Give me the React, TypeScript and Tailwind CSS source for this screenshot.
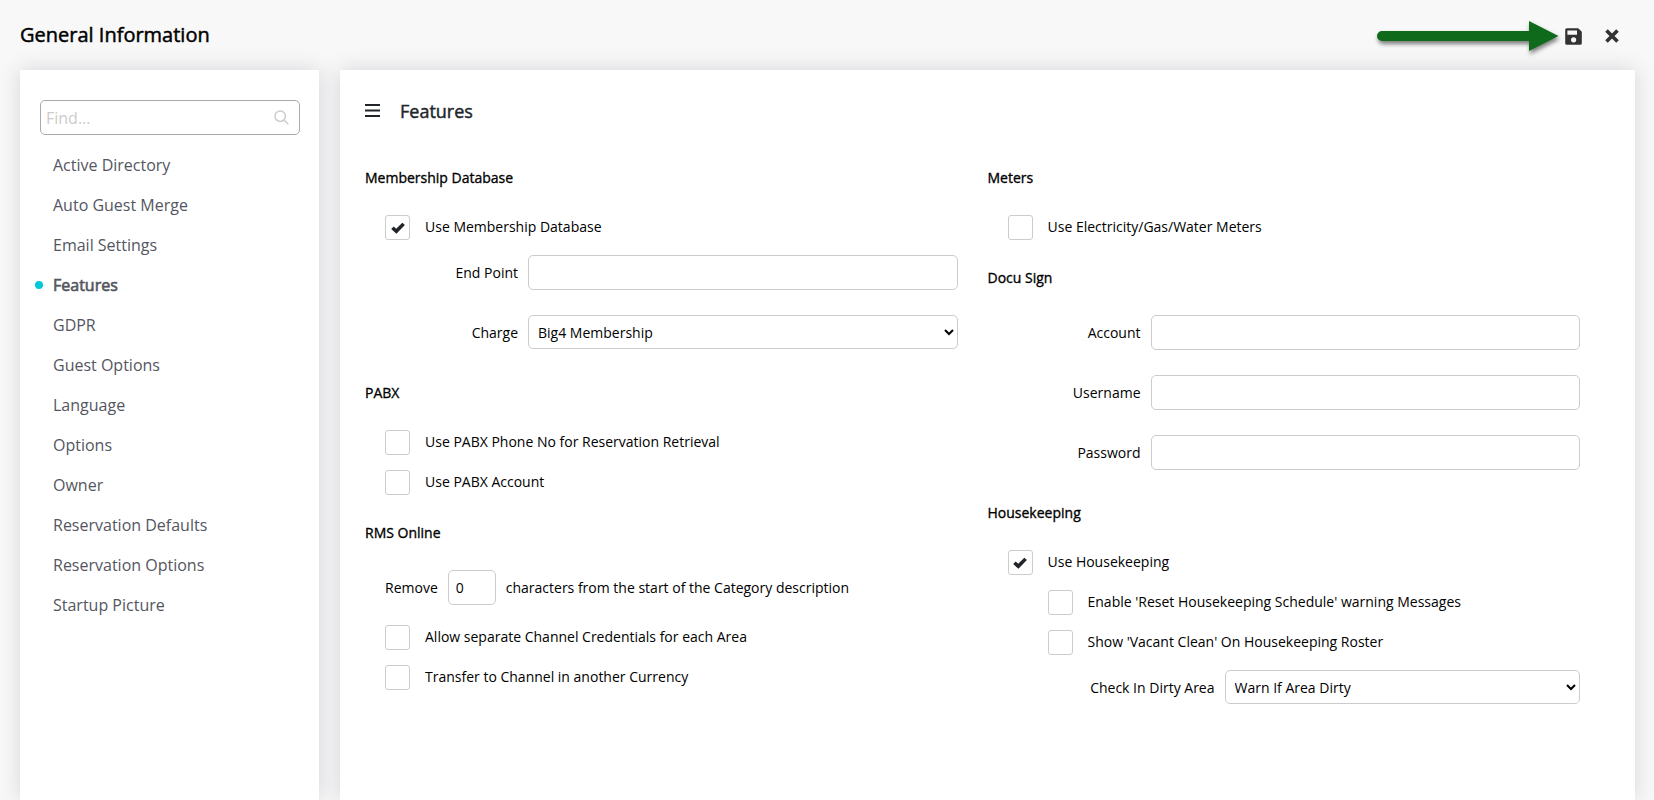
import type { ReactNode } from "react";

const navItems = [
  "Active Directory",
  "Auto Guest Merge",
  "Email Settings",
  "Features",
  "GDPR",
  "Guest Options",
  "Language",
  "Options",
  "Owner",
  "Reservation Defaults",
  "Reservation Options",
  "Startup Picture",
];

const controlClass =
  "w-full rounded-[5px] border border-[#ccc] bg-white text-sm text-black outline-none";

// regular weight thickened with a stroke, keeps the regular letter widths
const strongText = "[-webkit-text-stroke-width:0.024em]";

function SectionTitle({ children }: { children: ReactNode }) {
  return (
    <h3
      className={`flex h-15 items-center pt-0.5 text-sm text-black ${strongText}`}
    >
      {children}
    </h3>
  );
}

function CheckRow({
  id,
  label,
  checked = false,
}: {
  id: string;
  label: string;
  checked?: boolean;
}) {
  return (
    <div className="flex h-10 items-center gap-[15px] pl-5">
      <span className="grid size-[25px] shrink-0">
        <input
          id={id}
          type="checkbox"
          defaultChecked={checked}
          className="peer col-start-1 row-start-1 size-[25px] appearance-none rounded-[3px] border border-[#ccc] bg-white"
        />
        <svg
          viewBox="0 0 14 13"
          className="pointer-events-none invisible col-start-1 row-start-1 h-[13px] w-3.5 place-self-center fill-[#212529] peer-checked:visible"
        >
          <path d="M0.2 7.9 L2.7 5.5 L5.2 7.7 L11.300 1.700 L13.900 4 L5.400 12.800 Z" />
        </svg>
      </span>
      <label htmlFor={id} className="text-sm text-black">
        {label}
      </label>
    </div>
  );
}

function Fields({ children }: { children: ReactNode }) {
  return <div className="flex flex-col gap-[25px] pt-2 pb-3">{children}</div>;
}

function TextField({
  id,
  label,
  type = "text",
}: {
  id: string;
  label: string;
  type?: string;
}) {
  return (
    <div className="flex h-[35px] items-center gap-2.5">
      <label
        htmlFor={id}
        className="w-[153px] shrink-0 text-right text-sm text-black"
      >
        {label}
      </label>
      <input id={id} type={type} className={`${controlClass} h-[35px] px-2`} />
    </div>
  );
}

function SelectField({
  id,
  label,
  value,
  wide = false,
}: {
  id: string;
  label: string;
  value: string;
  wide?: boolean;
}) {
  return (
    <div className="flex h-[35px] items-start gap-2.5">
      <label
        htmlFor={id}
        className={`${wide ? "w-[227px]" : "w-[153px]"} shrink-0 text-right text-sm leading-[35px] text-black`}
      >
        {label}
      </label>
      <select id={id} className={`${controlClass} h-[34px] pl-[5px]`}>
        <option>{value}</option>
      </select>
    </div>
  );
}

function SaveIcon() {
  return (
    <svg viewBox="0 0 17 17" className="size-[17px] fill-[#333]">
      <path
        fillRule="evenodd"
        d="M1.8 0.2H13.2L16.8 3.8V15.2Q16.8 16.8 15.2 16.8H1.8Q0.2 16.8 0.2 15.2V1.8Q0.2 0.2 1.8 0.2ZM2.4 2.4V6.8H12V2.4ZM8.6 9.2A2.6 2.6 0 1 0 8.6 14.4A2.6 2.6 0 1 0 8.6 9.2Z"
      />
    </svg>
  );
}

function Header() {
  return (
    <header className="flex h-[70px] items-center justify-between pr-[31px] pl-5">
      <h1 className={`text-xl text-black ${strongText}`}>
        General Information
      </h1>
      <div className="flex items-center pt-0.5">
        <svg
          viewBox="0 0 190 40"
          className="h-10 w-[190px] fill-[#0f6b1b] drop-shadow-[1px_3px_2px_rgba(0,0,0,0.5)]"
        >
          <path d="M11 15H158V5L187.500 20L158 35V25H11A5 5 0 0 1 11 15Z" />
        </svg>
        <button type="button" aria-label="Save" className="p-1">
          <SaveIcon />
        </button>
        <button type="button" aria-label="Close" className="ml-[15px] p-1">
          <svg
            viewBox="0 0 14 14"
            className="size-3.5 fill-none stroke-[#333] stroke-[3.600]"
          >
            <path d="M1.500 1.500L12.500 12.500M12.500 1.500L1.500 12.500" />
          </svg>
        </button>
      </div>
    </header>
  );
}

function Sidebar() {
  return (
    <aside className="w-[299px] shrink-0 bg-white pt-[30px] pr-[19px] pl-5 shadow-[0_0_20px_rgba(60,60,90,0.18)]">
      <div className="flex h-[35px] items-center rounded-[5px] border border-[#aaa] pr-2.5 pl-[5px]">
        <input
          type="text"
          aria-label="Find"
          placeholder="Find..."
          className="min-w-0 flex-1 text-base text-[#54565f] outline-none placeholder:text-[#ccc]"
        />
        <svg
          viewBox="0 0 15 15"
          className="size-[15px] fill-none stroke-[#ccc] stroke-[1.500]"
        >
          <circle cx="6.200" cy="6.200" r="5.200" />
          <path d="M10 10L14.300 14.300" />
        </svg>
      </div>
      <nav className="-ml-[5px] pt-2.5">
        <ul>
          {navItems.map((item) => (
            <li key={item}>
              <a
                href="#"
                className={`flex h-10 items-center gap-2.5 text-base text-[#54565f] ${item === "Features" ? "[-webkit-text-stroke-width:0.04em]" : ""}`}
              >
                <span
                  className={`size-2 rounded-full ${item === "Features" ? "bg-[#00c8d7]" : ""}`}
                />
                {item}
              </a>
            </li>
          ))}
        </ul>
      </nav>
    </aside>
  );
}

function FeaturesPanel() {
  return (
    <main className="flex-1 bg-white px-[25px] shadow-[0_0_20px_rgba(60,60,90,0.18)]">
      <div className="flex h-[77px] items-center gap-5 pt-1">
        <button type="button" aria-label="Menu">
          <svg viewBox="0 0 15 13" className="h-[13px] w-[15px] fill-[#212529]">
            <path d="M0 0H15V2H0ZM0 5.500H15V7.500H0ZM0 11H15V13H0Z" />
          </svg>
        </button>
        <h2 className={`text-lg text-[#212529] ${strongText}`}>Features</h2>
      </div>
      <form className="grid grid-cols-2">
        <div className="pr-[30px]">
          <SectionTitle>Membership Database</SectionTitle>
          <CheckRow id="membership" label="Use Membership Database" checked />
          <Fields>
            <TextField id="end-point" label="End Point" />
            <SelectField id="charge" label="Charge" value="Big4 Membership" />
          </Fields>

          <SectionTitle>PABX</SectionTitle>
          <CheckRow
            id="pabx-phone"
            label="Use PABX Phone No for Reservation Retrieval"
          />
          <CheckRow id="pabx-account" label="Use PABX Account" />

          <SectionTitle>RMS Online</SectionTitle>
          <Fields>
            <div className="flex h-[35px] items-center gap-2.5 pl-5 text-sm text-black">
              <label htmlFor="remove">Remove</label>
              <span className="w-12">
                <input
                  id="remove"
                  type="text"
                  defaultValue="0"
                  className={`${controlClass} h-[35px] px-[7px]`}
                />
              </span>
              <span>
                characters from the start of the Category description
              </span>
            </div>
          </Fields>
          <CheckRow
            id="channel-credentials"
            label="Allow separate Channel Credentials for each Area"
          />
          <CheckRow
            id="channel-currency"
            label="Transfer to Channel in another Currency"
          />
        </div>

        <div className="pr-[30px]">
          <SectionTitle>Meters</SectionTitle>
          <CheckRow id="meters" label="Use Electricity/Gas/Water Meters" />

          <SectionTitle>Docu Sign</SectionTitle>
          <Fields>
            <TextField id="account" label="Account" />
            <TextField id="username" label="Username" />
            <TextField id="password" label="Password" type="password" />
          </Fields>

          <SectionTitle>Housekeeping</SectionTitle>
          <CheckRow id="housekeeping" label="Use Housekeeping" checked />
          <div className="pl-10">
            <CheckRow
              id="reset-warning"
              label="Enable 'Reset Housekeeping Schedule' warning Messages"
            />
            <CheckRow
              id="vacant-clean"
              label="Show 'Vacant Clean' On Housekeeping Roster"
            />
          </div>
          <Fields>
            <SelectField
              id="dirty-area"
              label="Check In Dirty Area"
              value="Warn If Area Dirty"
              wide
            />
          </Fields>
        </div>
      </form>
    </main>
  );
}

export default function App() {
  return (
    <div className="flex min-h-screen flex-col bg-[#f8f8f8] font-['Open_Sans',sans-serif]">
      <Header />
      <div className="flex flex-1 gap-[21px] pr-[19px] pl-5">
        <Sidebar />
        <FeaturesPanel />
      </div>
    </div>
  );
}
